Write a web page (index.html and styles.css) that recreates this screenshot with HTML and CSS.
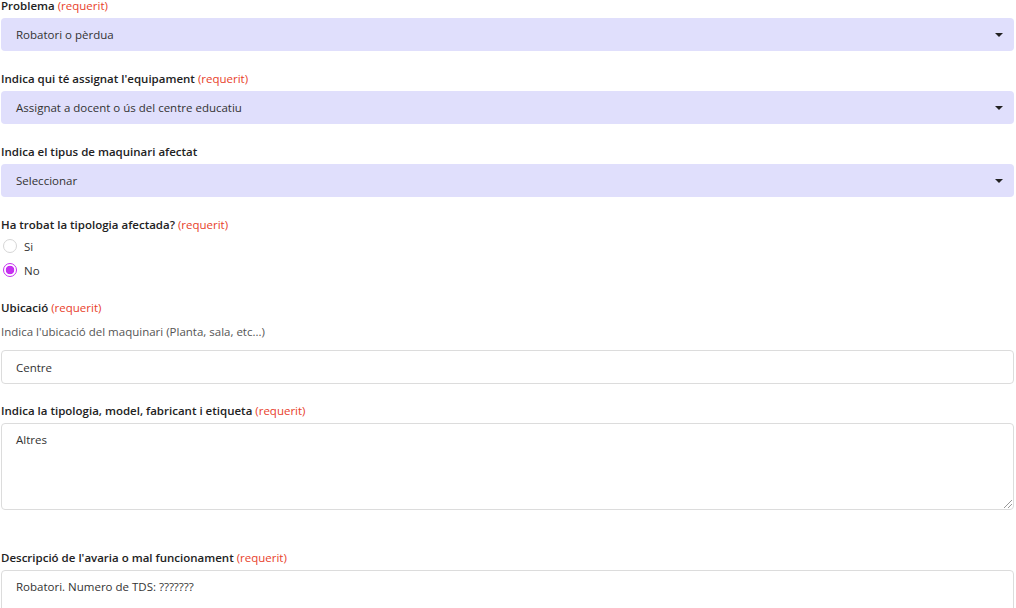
FILE: index.html
```html
<!DOCTYPE html>
<html lang="ca">
<head>
<meta charset="utf-8">
<link rel="stylesheet" href="styles.css">
</head>
<body>
<form class="form">
  <div class="group">
    <div class="label">Problema <span class="req">(requerit)</span></div>
    <div class="select"><span>Robatori o pèrdua</span><span class="caret"></span></div>
  </div>
  <div class="group">
    <div class="label">Indica qui té assignat l'equipament <span class="req">(requerit)</span></div>
    <div class="select"><span>Assignat a docent o ús del centre educatiu</span><span class="caret"></span></div>
  </div>
  <div class="group">
    <div class="label">Indica el tipus de maquinari afectat</div>
    <div class="select"><span>Seleccionar</span><span class="caret"></span></div>
  </div>
  <div class="group radio-group">
    <div class="label">Ha trobat la tipologia afectada? <span class="req">(requerit)</span></div>
    <div class="radios">
      <div class="radio"><span class="dot"></span><span>Si</span></div>
      <div class="radio"><span class="dot on"></span><span>No</span></div>
    </div>
  </div>
  <div class="group loc-group">
    <div class="label">Ubicació <span class="req">(requerit)</span></div>
    <div class="help">Indica l'ubicació del maquinari (Planta, sala, etc...)</div>
    <div class="input">Centre</div>
  </div>
  <div class="group wide">
    <div class="label">Indica la tipologia, model, fabricant i etiqueta <span class="req">(requerit)</span></div>
    <div class="input area">Altres<span class="grip"></span></div>
  </div>
  <div class="group">
    <div class="label">Descripció de l'avaria o mal funcionament <span class="req">(requerit)</span></div>
    <div class="input area">Robatori. Numero de TDS: ???????</div>
  </div>
</form>
</body>
</html>
```
FILE: styles.css
```css
html, body { margin: 0; padding: 0; background: #fff; }
body {
  font-family: "Open Sans", "Noto Sans", sans-serif;
  font-size: 11.5px;
  color: #222;
  width: 1016px;
  height: 608px;
  overflow: hidden;
}
.form { padding: 0 2px 0 1px; margin-top: -1px; }
.group { margin-bottom: 21px; }
.group.radio-group { margin-bottom: 24px; }
.group.loc-group { margin-bottom: 20px; }
.group.wide { margin-bottom: 41px; }
.label {
  font-weight: 600;
  line-height: 14px;
  margin-bottom: 5px;
  color: #222;
}
.req { font-weight: 400; color: #e8412b; }
.select {
  height: 33px;
  box-sizing: border-box;
  background: #e0dffc;
  border-radius: 4px;
  display: flex;
  align-items: center;
  justify-content: space-between;
  padding: 0 11px 0 15px;
  color: #333;
}
.caret {
  width: 0; height: 0;
  border-left: 4px solid transparent;
  border-right: 4px solid transparent;
  border-top: 4px solid #222;
}
.radios { display: flex; flex-direction: column; gap: 10px; margin-top: 7px; }
.radio { display: flex; align-items: center; gap: 7px; height: 14px; color: #333; }
.dot {
  width: 14px; height: 14px; box-sizing: border-box;
  border: 1px solid #d6d6d6; border-radius: 50%;
  margin-left: 2px; background: #fff;
}
.dot.on {
  border: 1px solid #c52ff0;
  background: radial-gradient(circle, #c52ff0 0 4px, #fff 4.6px);
}
.help { color: #555; line-height: 14px; margin: 10px 0 11px; }
.input {
  height: 34px;
  box-sizing: border-box;
  border: 1px solid #dcdcdc;
  border-radius: 4px;
  padding: 0 14px;
  display: flex;
  align-items: center;
  color: #333;
}
.input.area {
  height: 87px;
  align-items: flex-start;
  padding-top: 8px;
  position: relative;
}
.grip {
  position: absolute; right: 1px; bottom: 1px;
  width: 8px; height: 8px;
  background: linear-gradient(135deg, transparent 0 45%, #999 45% 52%, transparent 52% 70%, #999 70% 77%, transparent 77%);
}
```
